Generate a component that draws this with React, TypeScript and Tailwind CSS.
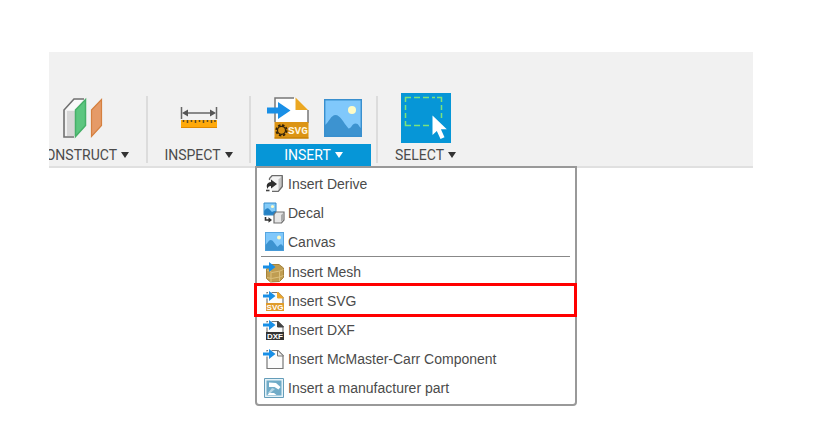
import { FC, ReactNode } from "react";
import clsx from "clsx";

const ConstructIcon: FC = () => (
  <svg width="42" height="42" viewBox="0 0 42 42" fill="none">
    <path d="M2 13 12 2h10L12 13z" fill="#fafafa" />
    <path d="M5 14h8v25H5z" fill="#d6d6d6" />
    <path d="M22 2H12L2 13v27h10" stroke="#707070" strokeWidth="1.6" />
    <path d="M13.500 13 23.500 2.500v26l-10 11z" fill="#5cc67f" stroke="#46b068" strokeWidth="1.500" />
    <path d="M29.500 13 39.500 2.500v26l-10 11z" fill="#e59a67" stroke="#d5803f" strokeWidth="1.200" />
  </svg>
);

const InspectIcon: FC = () => (
  <svg width="38" height="22" viewBox="0 0 38 22">
    <path d="M1.500 0v12M36.500 0v12M4 6h30" stroke="#666" strokeWidth="1.500" />
    <path d="m2 6 6-3.500v7zM36 6l-6-3.500v7z" fill="#555" />
    <path d="M1 13h36v8H1z" fill="#ffa90a" />
    <path d="M1 20.500h36" stroke="#e08a00" />
    <path
      d="M3.500 13v2M7.500 13v3M11.500 13v2M15.500 13v3M19.500 13v2M23.500 13v3M27.500 13v2M31.500 13v3M35 13v2"
      stroke="#5d4a22"
      strokeWidth="1.500"
    />
  </svg>
);

const InsertSvgIcon: FC = () => (
  <svg width="44" height="44" viewBox="0 0 44 44">
    <path d="M9 2h20l13 13v27H9z" fill="#fff" />
    <path d="M9 26V2h19M42 14v13" stroke="#777" strokeWidth="1.500" fill="none" />
    <path d="M29.500 1.500 42 14H29.500z" fill="#eba722" />
    <path d="M8.500 26h34v16.500h-34z" fill="#dc9414" />
    <path d="M8.500 42h34" stroke="#bd7800" />
    <g stroke="#30210a" fill="none">
      <circle cx="15.500" cy="34.300" r="4" strokeWidth="1.200" />
      <circle cx="15.500" cy="34.300" r="5.200" strokeWidth="1.800" strokeDasharray="2.400 1.680" />
    </g>
    <text x="22" y="38" fontSize="11" fontWeight="700" fill="#fff5dc" fontFamily="Liberation Mono, monospace">
      SVG
    </text>
    <path d="M1 11.500h11V6L24.500 14.500 12 23V17.500H1z" fill="#198fe6" />
  </svg>
);

const CanvasIcon: FC<{ size: number }> = ({ size }) => (
  <svg width={size} height={size} viewBox="0 0 38 38">
    <path d="M0 0h38v38H0z" fill="#80c8fb" />
    <path
      d="M1 26C5 23 7 16 11.500 16S19 23 24.500 29.500C27.500 29.500 28 24.500 31.500 24.500S35 28 37 29v8H1z"
      fill="#3d93d0"
    />
    <path d="M.7.7h36.600v36.600H.7z" fill="none" stroke="#398fce" strokeWidth="1.400" />
    <circle cx="28" cy="11" r="4" fill="#fdfbc7" />
  </svg>
);

const SelectIcon: FC = () => (
  <svg width="50" height="50" viewBox="0 0 50 50">
    <path d="M0 0h50v50H0z" fill="#0696d7" />
    <path
      d="M4.500 9V4.500H10M13 4.500h6M22 4.500h6M31 4.500h3M36 4.500h4.500V9M40.500 12v5M40.500 20v5M4.500 12v5M4.500 20v5M4.500 28v4.500H10M13 32.500h6M22 32.500h6"
      stroke="#7be37c"
      strokeWidth="1.500"
      fill="none"
    />
    <path d="M31.500 22.500V42l4.300-4 3.700 8 4-1.800-3.600-8h5.900z" fill="#fff" />
  </svg>
);

const DeriveIcon: FC = () => (
  <svg width="22" height="22" viewBox="0 0 22 22">
    <path d="M6 6.500 9.500 3H19v10.500L15 18H9" fill="#f4f4f4" />
    <path d="M15.500 6.500 19 3v10.500L15.500 18z" fill="#c4c4c4" />
    <path
      d="M6.500 7V5.500L9 2.700h10.300v10.800l-4 4.800H9"
      fill="none"
      stroke="#6b6b6b"
      strokeWidth="1.300"
      strokeLinejoin="round"
    />
    <path d="M8 6.500 14 11l-6 4.500V13c-2.200 0-3 1-3.500 3C2.800 12 4 9.500 8 9z" fill="#2e2e2e" />
    <path d="M3 17.500h3.500" stroke="#444" strokeWidth="1.600" />
  </svg>
);

const DecalIcon: FC = () => (
  <svg width="22" height="22" viewBox="0 0 22 22">
    <path d="M1 1h12v12H1z" fill="#83cbf8" />
    <path d="M1 9c2-3 4-4 6-1l2 2c1-1 2-1 4-1v4H1z" fill="#2581c4" />
    <path d="M1 1h12v12H1z" fill="none" stroke="#378dca" />
    <circle cx="9.500" cy="4.500" r="1.600" fill="#fdfbc7" />
    <path d="M11 12.500 13 10h8v8l-2.500 3H11z" fill="#e6e6e6" stroke="#707070" strokeWidth="1.200" />
    <path d="M18 13v7l2.500-3v-6z" fill="#aaa" />
    <path d="M2.500 15v3H6" stroke="#333" strokeWidth="1.600" fill="none" />
    <path d="m5.500 15.300 3.500 2.700-3.500 2.700z" fill="#333" />
  </svg>
);

const BlueArrow: FC = () => (
  <path d="M0 4.500h6V1l6.500 5L6 11V7.500H0z" fill="#198fe6" />
);

const MeshIcon: FC = () => (
  <svg width="22" height="22" viewBox="0 0 22 22">
    <path d="m3.500 8 4-4.500h8.500l4.500 3.500v9.500l-4 4-9 .5-4-3.500z" fill="#bf9d52" stroke="#a5833b" />
    <path
      d="m4 9 5 2.500 8-1.500 3.500-1.500M8 11.500V21M16.500 10.500v9.500M4 16.500l4.500 1 8-1.500 4-1.500"
      stroke="#dcc07c"
      strokeWidth="1"
      fill="none"
    />
    <BlueArrow />
  </svg>
);

interface FileIconProps {
  band?: string;
  fold: string;
  label?: string;
}

const FileIcon: FC<FileIconProps> = ({ band, fold, label }) => (
  <svg width="22" height="22" viewBox="0 0 22 22">
    <path d="M4 2.500h11l5 5v13H4z" fill="#fcfcfc" stroke="#777" strokeWidth="1.200" />
    <path d="M14.500 2v6h6z" fill={fold} stroke={band ? fold : "#777"} strokeWidth="1" />
    {band && (
      <>
        <path d="M3 13h18v8H3z" fill={band} />
        <text
          x="12"
          y="20"
          textAnchor="middle"
          fontSize="8"
          fontWeight="700"
          fill="#fff"
          fontFamily="Liberation Sans, sans-serif"
        >
          {label}
        </text>
      </>
    )}
    <path d="M0 3.500h5V0l8.500 6L5 12V8.500H0z" fill="#fff" />
    <BlueArrow />
  </svg>
);

const PartIcon: FC = () => (
  <svg width="22" height="22" viewBox="0 0 22 22">
    <path d="M1.500 1.500h19v19h-19z" fill="#e4f2f8" stroke="#659db9" />
    <path d="M3.500 3.500h15v15h-15z" fill="#70abc7" />
    <path d="m6 5.500 7 .5 4.500 4-2 2.500-4-2.500H6z" fill="#fff" />
    <path d="m9 11 3 1-4.500 4H5z" fill="#b5d6e5" />
    <path d="m4.500 18 1.500-2h5l2.500 2z" fill="#fff" />
  </svg>
);

interface ToolGroupProps {
  label: string;
  active?: boolean;
  className?: string;
  children: ReactNode;
}

const ToolGroup: FC<ToolGroupProps> = ({ label, active, className, children }) => (
  <div className={clsx("flex shrink-0 flex-col items-center gap-px", className)}>
    <div className="flex h-[50px] items-center gap-[14px]">{children}</div>
    <button
      type="button"
      className={clsx(
        "flex h-[22px] items-center justify-center gap-1 font-[Roboto,'Liberation_Sans',sans-serif] text-sm",
        active && "w-full bg-[#0696d7] text-white"
      )}
    >
      {label}
      <svg width="8" height="6" viewBox="0 0 8 6">
        <path d="M0 0h8L4 6z" fill={active ? "#fff" : "#333"} />
      </svg>
    </button>
  </div>
);

const Separator: FC = () => <div className="mt-[3px] h-[67px] w-[2px] shrink-0 bg-[#dcdcdc]" />;

interface MenuItemProps {
  icon: ReactNode;
  label: string;
  highlighted?: boolean;
}

const MenuItem: FC<MenuItemProps> = ({ icon, label, highlighted }) => (
  <li className="relative">
    <button type="button" className="flex h-[29px] w-full items-center gap-[3px] pl-[6px] text-left">
      {icon}
      {label}
    </button>
    {highlighted && (
      <span className="pointer-events-none absolute -bottom-[2px] -left-[3px] -right-[2px] -top-[3px] border-[3px] border-[#ff0000]" />
    )}
  </li>
);

const InsertMenu: FC = () => (
  <div className="absolute left-1 top-full z-10 w-[322px] rounded-b-[4px] border-2 border-[#999] bg-white pb-[2px] pt-px text-sm">
    <ul>
      <MenuItem icon={<DeriveIcon />} label="Insert Derive" />
      <MenuItem icon={<DecalIcon />} label="Decal" />
      <MenuItem
        icon={
          <span className="flex w-[22px] justify-center">
            <CanvasIcon size={19} />
          </span>
        }
        label="Canvas"
      />
    </ul>
    <hr className="ml-1 mr-[5px] border-t border-[#888]" />
    <ul>
      <MenuItem icon={<MeshIcon />} label="Insert Mesh" />
      <MenuItem icon={<FileIcon band="#df9b2b" fold="#efa72b" label="SVG" />} label="Insert SVG" highlighted />
      <MenuItem icon={<FileIcon band="#333" fold="#444" label="DXF" />} label="Insert DXF" />
      <MenuItem icon={<FileIcon fold="#eee" />} label="Insert McMaster-Carr Component" />
      <MenuItem icon={<PartIcon />} label="Insert a manufacturer part" />
    </ul>
  </div>
);

const App: FC = () => {
  return (
    <main className="min-h-screen bg-white pl-[49px] pr-[63px] pt-[52px] font-['Liberation_Sans',Arial,sans-serif] text-[#4b4b4b]">
      <div className="flex border-b-2 border-[#e0e0e0] bg-[#f1f1f1] pt-[41px]">
        <div className="flex w-[97px] shrink-0 justify-end overflow-hidden pr-[17px]">
          <ToolGroup label="CONSTRUCT">
            <ConstructIcon />
          </ToolGroup>
        </div>
        <Separator />
        <ToolGroup label="INSPECT" className="w-[101px]">
          <InspectIcon />
        </ToolGroup>
        <Separator />
        <div className="relative shrink-0">
          <ToolGroup label="INSERT" active className="w-[125px] px-[5px]">
            <InsertSvgIcon />
            <CanvasIcon size={38} />
          </ToolGroup>
          <InsertMenu />
        </div>
        <Separator />
        <ToolGroup label="SELECT" className="pl-[17px]">
          <SelectIcon />
        </ToolGroup>
      </div>
    </main>
  );
};

export default App;
